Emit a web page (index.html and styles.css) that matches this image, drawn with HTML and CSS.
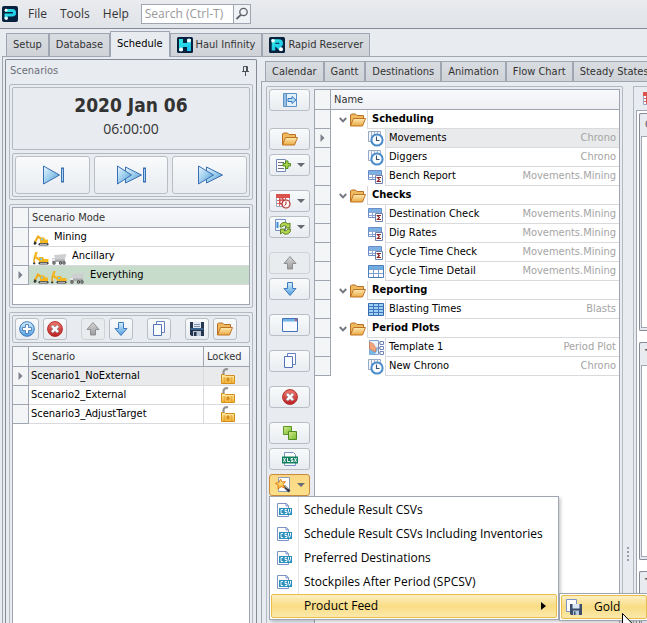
FILE: index.html
```html
<!DOCTYPE html>
<html lang="en">
<head>
<meta charset="utf-8">
<title>Schedule</title>
<link rel="stylesheet" href="styles.css">
</head>
<body>
<svg class="defs" aria-hidden="true">
  <defs>
    <linearGradient id="g-blue" x1="0" y1="0" x2="1" y2="1"><stop offset="0" stop-color="#e8f5fd"/><stop offset=".5" stop-color="#9bcdec"/><stop offset="1" stop-color="#4b90cf"/></linearGradient>
    <linearGradient id="g-arrow" x1="0" y1="0" x2="0" y2="1"><stop offset="0" stop-color="#d5effc"/><stop offset="1" stop-color="#4d9ee0"/></linearGradient>
    <linearGradient id="g-gray" x1="0" y1="0" x2="0" y2="1"><stop offset="0" stop-color="#d6d6d6"/><stop offset="1" stop-color="#9c9c9c"/></linearGradient>
    <linearGradient id="g-fold" x1="0" y1="0" x2="0" y2="1"><stop offset="0" stop-color="#fdeab4"/><stop offset="1" stop-color="#eba842"/></linearGradient>
    <linearGradient id="g-red" x1="0" y1="0" x2="0" y2="1"><stop offset="0" stop-color="#ee7a6c"/><stop offset="1" stop-color="#bb1f22"/></linearGradient>
    <linearGradient id="g-teal" gradientUnits="userSpaceOnUse" x1="0" y1="0" x2="16" y2="16"><stop offset="0" stop-color="#35f0dc"/><stop offset="1" stop-color="#18b7f2"/></linearGradient>
    <linearGradient id="g-green" x1="0" y1="0" x2="1" y2="1"><stop offset="0" stop-color="#d3ec8c"/><stop offset="1" stop-color="#77b82c"/></linearGradient>
    <linearGradient id="g-star" x1="0" y1="0" x2="0" y2="1"><stop offset="0" stop-color="#fff3a6"/><stop offset="1" stop-color="#f8b42c"/></linearGradient>
    <linearGradient id="g-lock" x1="0" y1="0" x2="0" y2="1"><stop offset="0" stop-color="#fff0b0"/><stop offset="1" stop-color="#f7b733"/></linearGradient>
  </defs>
  <symbol id="i-p" viewBox="0 0 16 16"><rect width="16" height="16" rx="2" fill="#07213f"/><path d="M3 4.500h7.300a2.300 2.300 0 0 1 0 4.600H4V12" fill="none" stroke="url(#g-teal)" stroke-width="3"/><circle cx="4" cy="4.200" r="1.400" fill="#fff"/><circle cx="4.200" cy="12.200" r="1.700" fill="#e8ffff"/></symbol>
  <symbol id="i-h" viewBox="0 0 16 16"><rect width="16" height="16" rx="1.500" fill="#07213f"/><path d="M4 2v12M12 2v12M4 8h8" fill="none" stroke="url(#g-teal)" stroke-width="4"/><circle cx="12" cy="3.500" r="2" fill="#fff"/><circle cx="4" cy="12.500" r="2" fill="#fff"/></symbol>
  <symbol id="i-r" viewBox="0 0 16 16"><rect width="16" height="16" rx="1.500" fill="#07213f"/><path d="M4.500 13.500V4h5.400a2.300 2.300 0 0 1 0 4.600H8l4 4" fill="none" stroke="url(#g-teal)" stroke-width="3.600"/><circle cx="4" cy="3.800" r="1.800" fill="#fff"/><circle cx="12" cy="12.300" r="2" fill="#fff"/></symbol>
  <symbol id="i-search" viewBox="0 0 16 16"><circle cx="9.500" cy="6" r="3.700" fill="none" stroke="#5c6068" stroke-width="1.300"/><path d="M6.800 8.800L2.500 13" stroke="#5c6068" stroke-width="1.800"/></symbol>
  <symbol id="i-pin" viewBox="0 0 9 10"><path d="M2.500 5V.500h4V5M5.500 1v4M1 5.500h7M4.500 6v4" fill="none" stroke="#4c5058"/></symbol>
  <symbol id="i-next" viewBox="0 0 32 20"><path d="M7.500 1l16 9-16 9z" fill="url(#g-blue)" stroke="#3a6fb3"/><rect x="25.500" y="3" width="2" height="14" fill="#a7d3ee" stroke="#3a6fb3"/></symbol>
  <symbol id="i-skip" viewBox="0 0 32 20"><path d="M10.500 2l16 8-16 8z" fill="url(#g-blue)" stroke="#3a6fb3"/><path d="M2.500 1l14 9-14 9z" fill="url(#g-blue)" stroke="#3a6fb3"/><rect x="28.500" y="3" width="2" height="14" fill="#a7d3ee" stroke="#3a6fb3"/></symbol>
  <symbol id="i-fast" viewBox="0 0 32 20"><path d="M12.500 2l16 8-16 8z" fill="url(#g-blue)" stroke="#3a6fb3"/><path d="M4.500 1l15 9-15 9z" fill="url(#g-blue)" stroke="#3a6fb3"/></symbol>
  <symbol id="i-digger" viewBox="0 0 16 13"><path d="M2 9L5 3.500l5 3.500" fill="none" stroke="#f0ad1c" stroke-width="2.200"/><path d="M1.500 8l2.500 2-2 2L.5 11z" fill="#333"/><path d="M7 4.500h4.500l.5 2h3v4H7z" fill="#f6b71d"/><path d="M8 5.500h2v2H8z" fill="#7cc9de"/><rect x="5.500" y="10" width="10" height="2.600" rx="1.300" fill="#444"/><path d="M7 11.300h7" stroke="#ccc"/></symbol>
  <symbol id="i-shovel" viewBox="0 0 16 13"><path d="M3.500 0L2 5l5 3" fill="none" stroke="#f5b51e" stroke-width="2.400"/><path d="M1.500 5L1 9l1 2" stroke="#e6a015" fill="none" stroke-width="1.400"/><path d="M.5 10l2 1.500-1 1L0 12z" fill="#333"/><path d="M6 5h4l1 2h4.500v3.500H6z" fill="#f6b71d"/><path d="M7 6h2v2H7z" fill="#7cc9de"/><rect x="5.500" y="10" width="10" height="2.600" rx="1.300" fill="#444"/><path d="M7 11.300h7" stroke="#ccc"/></symbol>
  <symbol id="i-truck" viewBox="0 0 16 13"><path d="M3 3l12.500-1-2 6H5l-4 1V6h3z" fill="#cdcfd0"/><path d="M1 7.500h13V10H1z" fill="#a9abad"/><path d="M1 7h3v2H1z" fill="#e5e7e8"/><g fill="#444"><circle cx="3" cy="11" r="1.700"/><circle cx="9.500" cy="11" r="1.700"/><circle cx="13" cy="11" r="1.700"/></g><g fill="#ccc"><circle cx="3" cy="11" r=".7"/><circle cx="9.500" cy="11" r=".7"/><circle cx="13" cy="11" r=".7"/></g></symbol>
  <symbol id="i-add" viewBox="0 0 16 16"><circle cx="8" cy="8" r="7.300" fill="url(#g-arrow)" stroke="#3c76bd"/><path d="M6.500 3.500h3v3h3v3h-3v3h-3v-3h-3v-3h3z" fill="#fff" stroke="#3c6fb0" stroke-width=".8"/></symbol>
  <symbol id="i-del" viewBox="0 0 16 16"><circle cx="8" cy="8" r="7.400" fill="url(#g-red)" stroke="#b02a2a"/><path d="M5.800 4L8 6l2.200-2L12 5.800 10 8l2 2.200-1.800 1.800L8 10l-2.200 2L4 10.200 6 8 4 5.800z" fill="#fff" stroke="#8d99ad" stroke-width=".6"/></symbol>
  <symbol id="i-up" viewBox="0 0 16 16"><path d="M8 1.500l6 7h-3.500V14h-5V8.500H2z" fill="url(#g-gray)" stroke="#8f8f8f"/></symbol>
  <symbol id="i-down" viewBox="0 0 16 16"><path d="M8 14.500l6-7h-3.500V1.500h-5v6H2z" fill="url(#g-arrow)" stroke="#3f79be"/></symbol>
  <symbol id="i-copy" viewBox="0 0 16 16"><path d="M5.500.500h8v11h-8z" fill="#fff" stroke="#6480bd"/><path d="M2.500 3.500h8v11h-8z" fill="#fafdff" stroke="#5573b6"/></symbol>
  <symbol id="i-save" viewBox="0 0 16 16"><path d="M1 1h14v14H2.500L1 13.500z" fill="#24354d"/><path d="M4 1h8v6H4z" fill="#dfe7f3"/><path d="M5 3.500h6M5 5.500h6" stroke="#8795ad"/><path d="M4 10h8v5H4z" fill="#b9c5d9"/><path d="M5 11h2.500v4H5z" fill="#24354d"/><path d="M1.500 8h13" stroke="#4d93ce"/></symbol>
  <symbol id="i-folder" viewBox="0 0 16 16"><path d="M.5 14V3l1-1h4l1.500 1.500h6.500V7" fill="#efb95e" stroke="#b86f26"/><path d="M3.500 6.500h12L12.500 14H.5z" fill="url(#g-fold)" stroke="#bf7425"/></symbol>
  <symbol id="i-lock" viewBox="0 0 16 18"><path d="M3.500 8V5A3 3 0 0 1 8 2.500" fill="none" stroke="#929292" stroke-width="2.200"/><path d="M1.500 7.500h3l1 1h9v8h-13z" fill="url(#g-lock)" stroke="#d48d1c"/><path d="M3.500 11h2M3.500 13h2M3.500 15h2M7 11h2v3H7zM10.500 11h2M10.500 13h2M10.500 15h2" fill="#d58c1c" stroke="#d58c1c"/></symbol>
  <symbol id="i-export" viewBox="0 0 16 16"><path d="M1.500 1.500h13v13h-13z" fill="#e3f1fb" stroke="#5f91c6"/><path d="M2 2h2v12H2z" fill="#94c0e5"/><path d="M4.500 1.500v13" stroke="#5f91c6"/><path d="M6 6.500h4v-2L14 8l-4 3.500v-2H6z" fill="#b6dff6" stroke="#3b78bb"/></symbol>
  <symbol id="i-new" viewBox="0 0 16 16"><path d="M1.500 2.500h9v12h-9z" fill="#fff" stroke="#7488b7"/><path d="M3 5.500h6M3 8.500h5M3 11.500h6" stroke="#6c7078"/><path d="M10.500 4h2.500v2.500h2.500V9H13v2.500h-2.500V9H8V6.500h2.500z" fill="#a9d449" stroke="#4f8e1c"/></symbol>
  <symbol id="i-cal" viewBox="0 0 16 16"><path d="M1.500 1.500h13v12h-13z" fill="#fff" stroke="#9aa7c2"/><path d="M1 1h14v4H1z" fill="#d9534c"/><path d="M2 7.500h11M2 10.500h8M4.500 5v8M7.500 5v8M10.500 5v4" stroke="#d86861"/><path d="M5 6h4v5H5z" fill="none" stroke="#c33d3d"/><circle cx="11" cy="11" r="4" fill="#fff4f1" stroke="#a92f2f" stroke-width="1.200"/><path d="M11 8.500V11L9.500 12.500" stroke="#a92f2f" fill="none"/></symbol>
  <symbol id="i-refresh" viewBox="0 0 16 16"><path d="M.5.500h10v11H.5z" fill="#f6faff" stroke="#7894c4"/><path d="M2.500 3v6" stroke="#3d8fd4" stroke-width="2"/><path d="M5 8a4.500 4.500 0 0 1 8-3l2-1v5h-5l1.500-1.600A3 3 0 0 0 7 8z" fill="#b4d84f" stroke="#55791e" stroke-width=".9"/><path d="M15.500 10a4.500 4.500 0 0 1-8 3.500l-2 1.500v-5H10L8.800 11.500A3 3 0 0 0 13 10z" fill="#b4d84f" stroke="#55791e" stroke-width=".9"/></symbol>
  <symbol id="i-window" viewBox="0 0 16 16"><path d="M.5 1.500h15v13H.5z" fill="#f7fafe" stroke="#4372b8"/><path d="M1 2h14v2.500H1z" fill="#6eb2e8"/><path d="M13 3h2" stroke="#e0413a" stroke-width="1.500"/></symbol>
  <symbol id="i-boxes" viewBox="0 0 16 16"><path d="M1.500 1.500h8v8h-8z" fill="url(#g-green)" stroke="#5b9629"/><path d="M6.500 6.500h8v8h-8z" fill="url(#g-green)" stroke="#4e8b20"/></symbol>
  <symbol id="i-xlsx" viewBox="0 0 16 16"><path d="M2.500 1.500h9l2 2v11h-11z" fill="#fff" stroke="#7a93c4"/><path d="M0 5.500h16v7H0z" fill="#12805f"/><path d="M1.500 7l2 4M3.500 7l-2 4M5.500 7v3.500H8M11 7.500H9V9h2v1.500H8.800M12.500 7l2 4M14.500 7l-2 4" fill="none" stroke="#fff" stroke-width=".9"/></symbol>
  <symbol id="i-wand" viewBox="0 0 16 16"><path d="M3.500.500h11v14h-11z" fill="#fff" stroke="#8c9bbc"/><path d="M9 9l5.500 5.500" stroke="#343b47" stroke-width="2.600"/><path d="M9.500 8.700l3 3" stroke="#c7ccd5"/><path d="M5.500 2l1.400 3 3.600-.5-2.300 3 1.300 3.300-3.400-1.200L3 12l.2-3.700L.5 6.300 4 5.500z" fill="url(#g-star)" stroke="#dd7e18"/></symbol>
  <symbol id="i-csv" viewBox="0 0 16 16"><path d="M1.500 1.500h9l2 2v11h-11z" fill="#fff" stroke="#7f92c6"/><path d="M10 1.500V4h2.500" fill="#dfe6f5" stroke="#7f92c6"/><path d="M3 6h13v7H3z" fill="#2a8fbd"/><path d="M7 7.500H5v4h2M11 7.500H9v2h2v2H8.700M12.500 7v2.500l1 2 1-2V7" fill="none" stroke="#fff" stroke-width=".9"/></symbol>
  <symbol id="i-savecopy" viewBox="0 0 16 16"><path d="M.5.500h10v12H.5z" fill="#fff" stroke="#7f92c6"/><path d="M4 5h12v11H5l-1-1z" fill="#3c4e6b"/><path d="M6.500 5h7v4.500h-7z" fill="#dce6f4"/><path d="M7 11.500h6V16H7z" fill="#b9c8df"/><path d="M8 12.500h1.500V16H8z" fill="#3c4e6b"/></symbol>
  <symbol id="i-chrono" viewBox="0 0 16 16"><path d="M.5.500h12v10H.5z" fill="#f1f5fa" stroke="#98a9c3"/><path d="M3.500 1v8M6.500 1v5M9.500 1v4" stroke="#a9b6ca"/><circle cx="9" cy="9" r="5.600" fill="#fbfdff" stroke="#4a8bca" stroke-width="2"/><path d="M8.500 5.500v4h3" fill="none" stroke="#41506a" stroke-width="1.100"/></symbol>
  <symbol id="i-sum" viewBox="0 0 16 16"><path d="M.5 1.500h13v9H.5z" fill="#fff" stroke="#6b8cc6"/><path d="M1 2h12v3H1z" fill="#78b3e8"/><path d="M1 5.500h12M1 8.500h12M4.500 2v8M8.500 2v8" stroke="#8ba8d4"/><path d="M7.500 6.500h7v8h-7z" fill="#fff" stroke="#6c80ad"/><path d="M13 8.500H9.500l1.800 2-1.800 2H13" fill="none" stroke="#8b2323" stroke-width="1.200"/></symbol>
  <symbol id="i-table" viewBox="0 0 16 16"><path d="M.5 1.500h15v12H.5z" fill="#fff" stroke="#4e7fbd"/><path d="M1 2h14v3H1z" fill="#6db0e6"/><path d="M1 5.500h14M1 9.500h14M5.500 2v11M10.500 2v11" stroke="#7b9fce"/></symbol>
  <symbol id="i-bluetable" viewBox="0 0 16 16"><path d="M.5 1.500h15v12H.5z" fill="#9dd0f3" stroke="#3769ae"/><path d="M1 4.500h14M1 7.500h14M1 10.500h14M5.500 2v11M10.500 2v11" stroke="#3f76bd"/></symbol>
  <symbol id="i-plot" viewBox="0 0 16 16"><path d="M1.500.500h9v14h-9z" fill="#eaf2fb" stroke="#7fa3d1"/><path d="M1.500 9a8 8 0 0 0 8-1 6 6 0 0 1-8 6.500z" fill="#79b6e8"/><path d="M1.500 2a8 8 0 0 1 6 10L1.500 9z" fill="#f3a67a" stroke="#cb6e48" stroke-width=".6"/><path d="M8 8h4M10.500 3v10M10.500 3H12M10.500 13H12" stroke="#7e8cab" fill="none"/><path d="M12 1.500h3.500v3H12zM12 6.500h3.500v3H12zM12 11.500h3.500v3H12z" fill="#fff" stroke="#6f83b8"/></symbol>
  <symbol id="i-row" viewBox="0 0 5 8"><path d="M.5 0L4.500 4l-4 4z" fill="#7b808a"/></symbol>
  <symbol id="i-chev" viewBox="0 0 8 6"><path d="M.8 1L4 4.300 7.200 1" fill="none" stroke="#72777f" stroke-width="1.900"/></symbol>
</svg>

<header class="menubar">
  <svg class="ic"><use href="#i-p"/></svg>
  <nav class="menus"><button>File</button><button>Tools</button><button>Help</button></nav>
  <form class="search">
    <input type="text" placeholder="Search (Ctrl-T)" aria-label="Search">
    <button type="button" aria-label="Find"><svg class="ic"><use href="#i-search"/></svg></button>
  </form>
</header>

<nav class="tabs tabs-main">
  <button class="tab">Setup</button>
  <button class="tab">Database</button>
  <button class="tab active">Schedule</button>
  <button class="tab"><svg class="ic"><use href="#i-h"/></svg>Haul Infinity</button>
  <button class="tab"><svg class="ic"><use href="#i-r"/></svg>Rapid Reserver</button>
</nav>

<main class="workspace">
  <section class="scenarios">
    <h2 class="panel-title">Scenarios<svg class="pin"><use href="#i-pin"/></svg></h2>
    <div class="group">
      <div class="box clock"><div class="date">2020 Jan 06</div><div class="time">06:00:00</div></div>
      <div class="box player">
        <button class="btn" aria-label="Step"><svg><use href="#i-next"/></svg></button>
        <button class="btn" aria-label="Skip"><svg><use href="#i-skip"/></svg></button>
        <button class="btn" aria-label="Run"><svg><use href="#i-fast"/></svg></button>
      </div>
    </div>
    <div class="group">
      <div class="grid modes">
        <table>
          <thead><tr><th class="ind"></th><th>Scenario Mode</th></tr></thead>
          <tbody>
            <tr><td class="ind"></td><td><div class="mode"><svg class="veh"><use href="#i-digger"/></svg><span>Mining</span></div></td></tr>
            <tr><td class="ind"></td><td><div class="mode"><svg class="veh"><use href="#i-shovel"/></svg><svg class="veh"><use href="#i-truck"/></svg><span>Ancillary</span></div></td></tr>
            <tr class="green"><td class="ind"><svg class="mark"><use href="#i-row"/></svg></td><td><div class="mode"><svg class="veh"><use href="#i-digger"/></svg><svg class="veh"><use href="#i-shovel"/></svg><svg class="veh"><use href="#i-truck"/></svg><span>Everything</span></div></td></tr>
          </tbody>
        </table>
      </div>
    </div>
    <div class="group fill">
      <div class="box toolbar">
        <button class="btn" aria-label="Add"><svg class="ic"><use href="#i-add"/></svg></button>
        <button class="btn" aria-label="Delete"><svg class="ic"><use href="#i-del"/></svg></button>
        <button class="btn gap off" aria-label="Move up"><svg class="ic"><use href="#i-up"/></svg></button>
        <button class="btn" aria-label="Move down"><svg class="ic"><use href="#i-down"/></svg></button>
        <button class="btn gap" aria-label="Copy"><svg class="ic"><use href="#i-copy"/></svg></button>
        <button class="btn gap" aria-label="Save"><svg class="ic"><use href="#i-save"/></svg></button>
        <button class="btn" aria-label="Open"><svg class="ic"><use href="#i-folder"/></svg></button>
      </div>
      <div class="grid list">
        <table>
          <thead><tr><th class="ind"></th><th>Scenario</th><th class="locked">Locked</th></tr></thead>
          <tbody>
            <tr class="sel"><td class="ind"><svg class="mark"><use href="#i-row"/></svg></td><td>Scenario1_NoExternal</td><td class="locked"><svg class="lock"><use href="#i-lock"/></svg></td></tr>
            <tr><td class="ind"></td><td>Scenario2_External</td><td class="locked"><svg class="lock"><use href="#i-lock"/></svg></td></tr>
            <tr><td class="ind"></td><td>Scenario3_AdjustTarget</td><td class="locked"><svg class="lock"><use href="#i-lock"/></svg></td></tr>
          </tbody>
        </table>
      </div>
    </div>
  </section>

  <section class="content">
    <nav class="tabs tabs-sub">
      <button class="tab">Calendar</button>
      <button class="tab">Gantt</button>
      <button class="tab">Destinations</button>
      <button class="tab">Animation</button>
      <button class="tab">Flow Chart</button>
      <button class="tab">Steady States</button>
    </nav>
    <div class="panes">
      <div class="reports">
        <div class="tools">
          <button class="btn" aria-label="Export"><svg class="ic"><use href="#i-export"/></svg></button>
          <button class="btn gap" aria-label="Open"><svg class="ic"><use href="#i-folder"/></svg></button>
          <button class="btn drop" aria-label="New"><svg class="ic"><use href="#i-new"/></svg></button>
          <button class="btn gap drop" aria-label="Calendar"><svg class="ic"><use href="#i-cal"/></svg></button>
          <button class="btn drop" aria-label="Refresh"><svg class="ic"><use href="#i-refresh"/></svg></button>
          <button class="btn gap off" aria-label="Move up"><svg class="ic"><use href="#i-up"/></svg></button>
          <button class="btn" aria-label="Move down"><svg class="ic"><use href="#i-down"/></svg></button>
          <button class="btn gap" aria-label="Window"><svg class="ic"><use href="#i-window"/></svg></button>
          <button class="btn gap" aria-label="Copy"><svg class="ic"><use href="#i-copy"/></svg></button>
          <button class="btn gap" aria-label="Delete"><svg class="ic"><use href="#i-del"/></svg></button>
          <button class="btn gap" aria-label="Group"><svg class="ic"><use href="#i-boxes"/></svg></button>
          <button class="btn" aria-label="Excel"><svg class="ic"><use href="#i-xlsx"/></svg></button>
          <div class="anchor">
            <button class="btn drop hot" aria-label="Wizards"><svg class="ic"><use href="#i-wand"/></svg></button>
            <div class="menu">
              <button><svg class="ic"><use href="#i-csv"/></svg>Schedule Result CSVs</button>
              <button><svg class="ic"><use href="#i-csv"/></svg>Schedule Result CSVs Including Inventories</button>
              <button><svg class="ic"><use href="#i-csv"/></svg>Preferred Destinations</button>
              <button><svg class="ic"><use href="#i-csv"/></svg>Stockpiles After Period (SPCSV)</button>
              <button class="on more">Product Feed</button>
              <div class="submenu"><button class="on"><svg class="ic"><use href="#i-savecopy"/></svg>Gold</button>
                <svg class="cursor" viewBox="0 0 12 19"><path d="M.5.500v16l3.700-3.600 2.500 5.600 2.400-1-2.500-5.500h5z" fill="#fff" stroke="#000"/></svg>
              </div>
            </div>
          </div>
        </div>
        <div class="grid tree">
          <table>
            <thead><tr><th class="ind"></th><th colspan="2">Name</th></tr></thead>
            <tbody>
              <tr><td class="ind"></td><td class="name"><div class="node"><svg class="chev"><use href="#i-chev"/></svg><svg class="ic"><use href="#i-folder"/></svg><b>Scheduling</b></div></td><td class="type"></td></tr>
              <tr class="sel"><td class="ind"><svg class="mark"><use href="#i-row"/></svg></td><td class="name"><div class="node leaf"><svg class="ic"><use href="#i-chrono"/></svg><span>Movements</span></div></td><td class="type">Chrono</td></tr>
              <tr><td class="ind"></td><td class="name"><div class="node leaf"><svg class="ic"><use href="#i-chrono"/></svg><span>Diggers</span></div></td><td class="type">Chrono</td></tr>
              <tr><td class="ind"></td><td class="name"><div class="node leaf"><svg class="ic"><use href="#i-sum"/></svg><span>Bench Report</span></div></td><td class="type">Movements.Mining</td></tr>
              <tr><td class="ind"></td><td class="name"><div class="node"><svg class="chev"><use href="#i-chev"/></svg><svg class="ic"><use href="#i-folder"/></svg><b>Checks</b></div></td><td class="type"></td></tr>
              <tr><td class="ind"></td><td class="name"><div class="node leaf"><svg class="ic"><use href="#i-sum"/></svg><span>Destination Check</span></div></td><td class="type">Movements.Mining</td></tr>
              <tr><td class="ind"></td><td class="name"><div class="node leaf"><svg class="ic"><use href="#i-sum"/></svg><span>Dig Rates</span></div></td><td class="type">Movements.Mining</td></tr>
              <tr><td class="ind"></td><td class="name"><div class="node leaf"><svg class="ic"><use href="#i-sum"/></svg><span>Cycle Time Check</span></div></td><td class="type">Movements.Mining</td></tr>
              <tr><td class="ind"></td><td class="name"><div class="node leaf"><svg class="ic"><use href="#i-table"/></svg><span>Cycle Time Detail</span></div></td><td class="type">Movements.Mining</td></tr>
              <tr><td class="ind"></td><td class="name"><div class="node"><svg class="chev"><use href="#i-chev"/></svg><svg class="ic"><use href="#i-folder"/></svg><b>Reporting</b></div></td><td class="type"></td></tr>
              <tr><td class="ind"></td><td class="name"><div class="node leaf"><svg class="ic"><use href="#i-bluetable"/></svg><span>Blasting Times</span></div></td><td class="type">Blasts</td></tr>
              <tr><td class="ind"></td><td class="name"><div class="node"><svg class="chev"><use href="#i-chev"/></svg><svg class="ic"><use href="#i-folder"/></svg><b>Period Plots</b></div></td><td class="type"></td></tr>
              <tr><td class="ind"></td><td class="name"><div class="node leaf"><svg class="ic"><use href="#i-plot"/></svg><span>Template 1</span></div></td><td class="type">Period Plot</td></tr>
              <tr><td class="ind"></td><td class="name"><div class="node leaf"><svg class="ic"><use href="#i-chrono"/></svg><span>New Chrono</span></div></td><td class="type">Chrono</td></tr>
            </tbody>
          </table>
        </div>
      </div>
      <div class="splitter"><i></i><i></i><i></i><i></i></div>
      <aside class="side">
        <div class="side-bar"><svg class="ic"><use href="#i-cal"/></svg></div>
        <div class="docks">
          <div class="dock"><h3>C</h3><div class="dock-body"></div></div>
          <div class="dock"><h3>T</h3><div class="dock-body"></div></div>
          <div class="dock"><h3>T</h3><div class="dock-body"></div></div>
        </div>
      </aside>
    </div>
  </section>
</main>
</body>
</html>
```
FILE: styles.css
```css
:root {
  --bg: #e8ebf0;
  --line: #a0a6b1;
  --soft: #b4b8c0;
  --dark: #858a96;
  --rule: #d8dadd;
  --ui: "DejaVu Sans Condensed", "Noto Sans", sans-serif;
  --menu: "Open Sans", "Noto Sans", sans-serif;
}
* { box-sizing: border-box; }
body {
  margin: 0;
  height: 100vh;
  overflow: hidden;
  display: flex;
  flex-direction: column;
  background: var(--bg);
  color: #333;
  font: 11px/16px var(--ui);
}
button, input { font: inherit; color: inherit; margin: 0; padding: 0; border: 0; background: none; border-radius: 0; }
svg { display: block; flex: none; }
.defs { position: absolute; width: 0; height: 0; }
.ic { width: 16px; height: 16px; }

.menubar {
  flex: none;
  height: 29px;
  display: flex;
  align-items: center;
  padding-left: 2px;
  border-bottom: 1px solid var(--dark);
  background: linear-gradient(#e9ebef, #e0e3e7);
}
.menus { display: flex; gap: 13px; padding: 0 12px 0 10px; font: 12px/16px var(--menu); }
.search { display: flex; width: 110px; height: 20px; border: 1px solid var(--line); background: #fff; }
.search input { flex: 1; min-width: 0; padding-left: 3px; outline: 0; font: 12px/16px var(--menu); }
.search input::placeholder { color: #999; opacity: 1; }
.search button { width: 17px; border-left: 1px solid var(--line); background: #f0f2f5; }

.tabs { flex: none; display: flex; align-items: flex-end; border-bottom: 1px solid var(--line); }
.tabs-main { height: 28px; margin-left: 2px; padding-left: 4px; }
.tab {
  flex: none;
  display: flex;
  align-items: center;
  gap: 3px;
  height: 23px;
  padding: 0 6px;
  border: 1px solid var(--line);
  border-bottom: 0;
  background: linear-gradient(#d9dce1, #cfd3d8);
  white-space: nowrap;
}
.tab.active { height: 26px; margin-bottom: -1px; padding-bottom: 2px; background: var(--bg); color: #000; }
.tabs-sub { height: 21px; margin-top: 2px; padding-left: 4px; }
.tabs-sub .tab { height: 20px; }

.workspace { flex: 1; min-height: 0; display: flex; gap: 4px; margin-left: 2px; padding: 2px 0 0 2px; border-left: 1px solid var(--line); }
.scenarios {
  flex: 0 0 252px;
  display: flex;
  flex-direction: column;
  gap: 4px;
  padding: 0 3px;
  border: 1px solid var(--dark);
  border-bottom: 0;
  border-radius: 2px 2px 0 0;
}
.panel-title { display: flex; justify-content: space-between; align-items: center; height: 20px; margin: 0; padding: 2px 3px 0 1px; font: inherit; color: #6b6f78; }
.pin { width: 9px; height: 10px; }
.group { display: flex; flex-direction: column; gap: 3px; padding: 2px; border: 1px solid var(--soft); border-radius: 2px; }
.group.fill { flex: 1; border-bottom: 0; padding-bottom: 0; border-radius: 2px 2px 0 0; }
.box { border: 1px solid var(--soft); border-radius: 2px; }
.clock { height: 63px; text-align: center; padding-top: 5px; }
.date { font: bold 19px/24px var(--ui); }
.time { font: 14px/24px var(--menu); }
.player { display: flex; gap: 4px; height: 44px; padding: 2px; }
.player .btn { flex: 1; }
.player svg { width: 32px; height: 20px; }
.btn {
  display: flex;
  align-items: center;
  justify-content: center;
  border: 1px solid #b9bdc4;
  border-radius: 3px;
  background: linear-gradient(#f8fafb, #e9ecf0);
}
.btn.off { border-color: #cfd2d7; background: #e9ecef; }
.toolbar { display: flex; gap: 4px; height: 28px; padding: 2px; }
.toolbar .btn { width: 24px; }
.toolbar .gap { margin-left: 10px; }

.grid { border: 1px solid var(--line); background: #fff; color: #000; }
.modes { height: 98px; }
.list { flex: 1; border-bottom: 0; }
table { width: 100%; border-collapse: separate; border-spacing: 0; table-layout: fixed; }
th, td { height: 19px; padding: 0 0 0 2px; line-height: 16px; text-align: left; font-weight: normal; border-bottom: 1px solid var(--rule); white-space: nowrap; }
th { height: 20px; padding-left: 3px; color: #333; border-bottom-color: var(--line); background: linear-gradient(#f8f9fb, #eef0f4); }
.ind { width: 16px; padding: 0; border-right: 1px solid var(--line); border-bottom-color: var(--line); background: #f4f5f7; }
.mark { width: 5px; height: 8px; margin: 0 auto; }
.locked { width: 46px; border-left: 1px solid var(--rule); }
th.locked { border-left-color: var(--line); }
.lock { width: 16px; height: 18px; margin: 0 auto; }
.sel td:not(.ind) { background: #e9eaeb; }
.green td:not(.ind) { background: #c8dccb; }
.mode { display: flex; align-items: center; gap: 2px; height: 18px; padding-left: 2px; }
.mode span { padding-left: 3px; }
.veh { width: 16px; height: 13px; align-self: flex-end; }

.content { flex: 1; min-width: 0; display: flex; flex-direction: column; }
.panes { flex: 1; min-height: 0; display: flex; padding: 4px 0 0 4px; border-left: 1px solid var(--line); }
.reports { flex: 1; min-width: 0; display: flex; gap: 4px; padding: 2px 2px 0; border: 1px solid var(--soft); border-bottom: 0; border-radius: 2px 2px 0 0; }
.tools { flex: 0 0 41px; display: flex; flex-direction: column; gap: 4px; }
.tools .btn { flex: none; width: 100%; height: 22px; }
.tools .gap { margin-top: 10px; }
.tools .btn:first-child + .gap { margin-top: 13px; }
.tools .drop { gap: 6px; }
.drop::after { content: ""; border: 4px solid transparent; border-top-color: #666a72; border-bottom: 0; }
.tools .hot { border-color: #c98a3c; background: linear-gradient(#fbd784, #fde08a); }
.tree { flex: 1; min-width: 0; border-bottom: 0; }
.tree .name { width: auto; padding: 0; border-bottom: 0; }
.type { width: 110px; padding: 0 3px 0 0; text-align: right; color: #a5a5a5; }
.node { display: flex; align-items: center; height: 19px; padding-left: 8px; background: #fff; }
.node.leaf { padding-left: 37px; }
.chev { width: 8px; height: 6px; margin-right: 3px; }
.node b, .node span { flex: 1; height: 19px; margin-left: 1px; padding: 1px 0 0 4px; border-left: 1px solid var(--rule); border-bottom: 1px solid var(--rule); }
.node span { padding-left: 3px; }
.sel .node span { background: #e9eaeb; }

.anchor { position: relative; }
.menu, .submenu { position: absolute; z-index: 5; border: 1px solid var(--line); background: #fff; box-shadow: 2px 2px 3px rgba(0, 0, 0, .2); }
.menu { top: 22px; left: 0; width: 290px; padding: 1px; color: #000; background: linear-gradient(90deg, #fff 28px, #e2e4e7 28px, #e2e4e7 29px, #fff 29px); }
.menu button { display: flex; align-items: center; gap: 12px; width: 100%; height: 24px; padding-left: 4px; border: 1px solid transparent; border-radius: 2px; font: 12px/16px var(--menu); white-space: nowrap; }
.menu .on { border-color: #e8bd4c; background: linear-gradient(#fcefc2, #f9dd84 50%, #fbe9ab); }
.menu .more { padding: 0 10px 0 32px; justify-content: space-between; }
.more::after { content: ""; border: 4px solid transparent; border-left: 5px solid #000; border-right: 0; }
.submenu { left: 289px; bottom: -2px; width: 90px; padding: 1px; }
.cursor { position: absolute; left: 62px; top: 19px; width: 12px; height: 19px; }

.splitter { flex: 0 0 10px; display: flex; flex-direction: column; align-items: center; gap: 2px; padding-top: 461px; }
.splitter i { width: 2px; height: 2px; background: #9a9fa9; }
.side { flex: 0 0 14px; min-width: 0; overflow: hidden; display: flex; flex-direction: column; border: 1px solid var(--soft); border-width: 1px 0 0 1px; }
.side-bar { flex: none; height: 23px; padding: 4px 0 0 8px; }
.docks { flex: 1; display: flex; flex-direction: column; gap: 11px; margin-left: 2px; padding: 2px 0 0 2px; border: 1px solid var(--line); border-width: 1px 0 0 1px; background: #fff; }
.dock { flex: none; padding: 0 0 2px 1px; border: 1px solid var(--dark); border-right: 0; border-radius: 2px 0 0 2px; background: var(--bg); }
.dock h3 { height: 22px; margin: 0; padding: 3px 0 0 4px; font: 11px/16px var(--ui); color: #555a64; }
.dock + .dock h3 { font-weight: bold; }
.dock-body { height: 192px; border: 1px solid var(--line); border-right: 0; background: #fff; }
```
